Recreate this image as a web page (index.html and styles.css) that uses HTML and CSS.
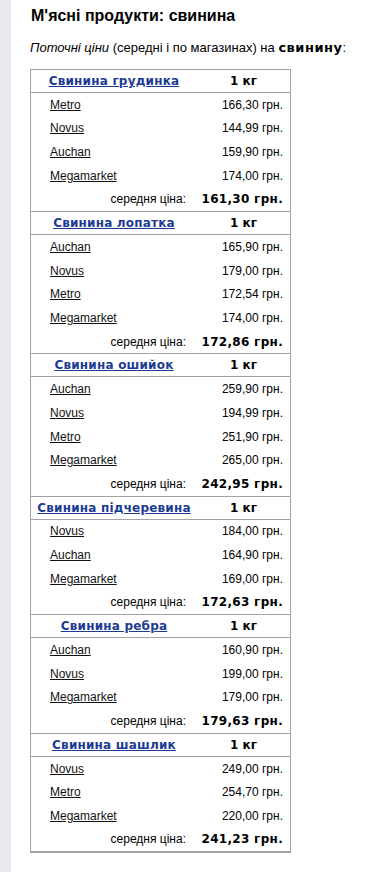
FILE: index.html
```html
<!DOCTYPE html>
<html lang="uk">
<head>
<meta charset="utf-8">
<title>М'ясні продукти: свинина</title>
<link rel="stylesheet" href="styles.css">
</head>
<body>
<div class="page">
  <div class="strip"></div>
  <main class="main">
    <h1 class="title">М'ясні продукти: свинина</h1>
    <p class="lead"><em>Поточні ціни</em> (середні і по магазинах) на <b>свинину</b>:</p>
    <table class="prices">
      <tbody>
        <tr class="head"><td class="name"><a href="#">Свинина грудинка</a></td><td class="unit">1 кг</td></tr>
        <tr class="row"><td class="shop"><a href="#">Metro</a></td><td class="price">166,30 грн.</td></tr>
        <tr class="row"><td class="shop"><a href="#">Novus</a></td><td class="price">144,99 грн.</td></tr>
        <tr class="row"><td class="shop"><a href="#">Auchan</a></td><td class="price">159,90 грн.</td></tr>
        <tr class="row"><td class="shop"><a href="#">Megamarket</a></td><td class="price">174,00 грн.</td></tr>
        <tr class="avg"><td class="avg-label">середня ціна:</td><td class="avg-value">161,30 грн.</td></tr>

        <tr class="head"><td class="name"><a href="#">Свинина лопатка</a></td><td class="unit">1 кг</td></tr>
        <tr class="row"><td class="shop"><a href="#">Auchan</a></td><td class="price">165,90 грн.</td></tr>
        <tr class="row"><td class="shop"><a href="#">Novus</a></td><td class="price">179,00 грн.</td></tr>
        <tr class="row"><td class="shop"><a href="#">Metro</a></td><td class="price">172,54 грн.</td></tr>
        <tr class="row"><td class="shop"><a href="#">Megamarket</a></td><td class="price">174,00 грн.</td></tr>
        <tr class="avg"><td class="avg-label">середня ціна:</td><td class="avg-value">172,86 грн.</td></tr>

        <tr class="head"><td class="name"><a href="#">Свинина ошийок</a></td><td class="unit">1 кг</td></tr>
        <tr class="row"><td class="shop"><a href="#">Auchan</a></td><td class="price">259,90 грн.</td></tr>
        <tr class="row"><td class="shop"><a href="#">Novus</a></td><td class="price">194,99 грн.</td></tr>
        <tr class="row"><td class="shop"><a href="#">Metro</a></td><td class="price">251,90 грн.</td></tr>
        <tr class="row"><td class="shop"><a href="#">Megamarket</a></td><td class="price">265,00 грн.</td></tr>
        <tr class="avg"><td class="avg-label">середня ціна:</td><td class="avg-value">242,95 грн.</td></tr>

        <tr class="head"><td class="name"><a href="#">Свинина підчеревина</a></td><td class="unit">1 кг</td></tr>
        <tr class="row"><td class="shop"><a href="#">Novus</a></td><td class="price">184,00 грн.</td></tr>
        <tr class="row"><td class="shop"><a href="#">Auchan</a></td><td class="price">164,90 грн.</td></tr>
        <tr class="row"><td class="shop"><a href="#">Megamarket</a></td><td class="price">169,00 грн.</td></tr>
        <tr class="avg"><td class="avg-label">середня ціна:</td><td class="avg-value">172,63 грн.</td></tr>

        <tr class="head"><td class="name"><a href="#">Свинина ребра</a></td><td class="unit">1 кг</td></tr>
        <tr class="row"><td class="shop"><a href="#">Auchan</a></td><td class="price">160,90 грн.</td></tr>
        <tr class="row"><td class="shop"><a href="#">Novus</a></td><td class="price">199,00 грн.</td></tr>
        <tr class="row"><td class="shop"><a href="#">Megamarket</a></td><td class="price">179,00 грн.</td></tr>
        <tr class="avg"><td class="avg-label">середня ціна:</td><td class="avg-value">179,63 грн.</td></tr>

        <tr class="head"><td class="name"><a href="#">Свинина шашлик</a></td><td class="unit">1 кг</td></tr>
        <tr class="row"><td class="shop"><a href="#">Novus</a></td><td class="price">249,00 грн.</td></tr>
        <tr class="row"><td class="shop"><a href="#">Metro</a></td><td class="price">254,70 грн.</td></tr>
        <tr class="row"><td class="shop"><a href="#">Megamarket</a></td><td class="price">220,00 грн.</td></tr>
        <tr class="avg"><td class="avg-label">середня ціна:</td><td class="avg-value">241,23 грн.</td></tr>
      </tbody>
    </table>
  </main>
</div>
</body>
</html>
```

FILE: styles.css
```css
html, body {
  margin: 0;
  padding: 0;
  background: #ffffff;
}

body {
  font-family: "Liberation Sans", Arial, sans-serif;
  color: #000000;
}

.page {
  display: flex;
  min-height: 872px;
}

.strip {
  width: 11px;
  flex: 0 0 11px;
  background: #e9eaee;
}

.main {
  flex: 1;
  padding: 0 0 0 19px;
}

.title {
  margin: 6px 0 0 1px;
  font-size: 16px;
  line-height: 20px;
  font-weight: bold;
}

.lead {
  margin: 13px 0 0 0;
  font-size: 13px;
  line-height: 18px;
}

.lead b {
  font-family: "DejaVu Sans", Verdana, sans-serif;
  font-size: 13px;
  letter-spacing: 0.5px;
}

.prices {
  margin-top: 12px;
  width: 261px;
  border-collapse: collapse;
  border: 1px solid #a3a3a3;
  border-bottom-width: 2px;
}

.prices td {
  padding: 0;
}

.head td {
  height: 22px;
  border-top: 1px solid #a3a3a3;
  border-bottom: 1px solid #a3a3a3;
  font-family: "DejaVu Sans", Verdana, sans-serif;
  font-weight: bold;
  font-size: 12px;
  text-align: center;
}

.head .name {
  width: 166px;
}

.head .name a {
  color: #1c3b94;
  letter-spacing: 0.2px;
}

.head .unit {
  color: #000;
}

.row td,
.avg td {
  height: 23.65px;
  font-size: 12px;
}

.shop {
  padding-left: 19px !important;
  text-align: left;
}

.shop a {
  color: #111111;
}

.price {
  text-align: right;
  padding-right: 7px !important;
}

.avg-label {
  text-align: right;
  padding-right: 11px !important;
}

.avg-value {
  text-align: right;
  padding-right: 7px !important;
  font-family: "DejaVu Sans", Verdana, sans-serif;
  font-weight: bold;
  font-size: 12px;
  letter-spacing: 0.3px;
}
```
